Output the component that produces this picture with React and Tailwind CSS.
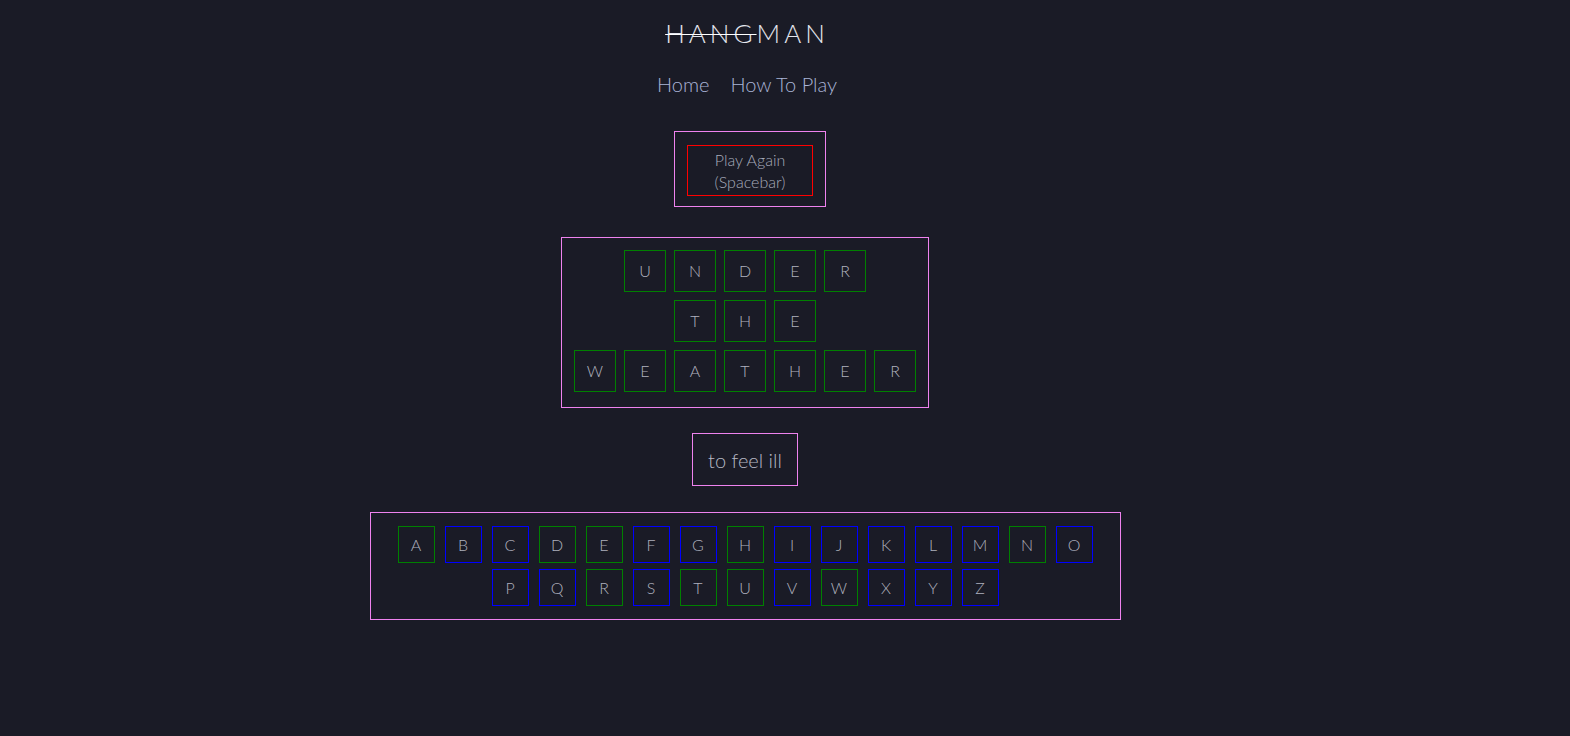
import React from 'react';

const WORDS = ['UNDER', 'THE', 'WEATHER'];

const ROW_ONE = 'ABCDEFGHIJKLMNO'.split('');
const ROW_TWO = 'PQRSTUVWXYZ'.split('');

// letters that were guessed right get a green border, the rest stay blue
const HITS = ['A', 'D', 'E', 'H', 'N', 'R', 'T', 'U', 'W'];

const Key = ({ letter }) => (
  <div
    className={`w-[37px] h-[37px] flex items-center justify-center border text-[16px] text-[#aeb0bd] ${
      HITS.includes(letter) ? 'border-[#008000]' : 'border-[#0000ff]'
    }`}
  >
    {letter}
  </div>
);

export default function App() {
  return (
    <div
      className="min-h-screen bg-[#1a1b26] flex flex-col items-center pr-[80px] font-light"
      style={{ fontFamily: 'Lato, "Open Sans", sans-serif' }}
    >
      {/* Title */}
      <h1 className="pt-[13px] pl-[4px] text-[26px] leading-[40px] tracking-[4px] text-[#e4e6ee] font-light">
        <span className="line-through decoration-white decoration-1">HANG</span>
        <span>MAN</span>
      </h1>

      {/* Nav */}
      <nav className="mt-[17px] ml-[4px] flex gap-[21px] text-[20px] leading-[28px] text-[#a9b4d6]">
        <a href="#">Home</a>
        <a href="#">How To Play</a>
      </nav>

      {/* Play again */}
      <div className="mt-[33px] ml-[10px] border border-[violet] pt-[13px] pb-[10px] px-[12px]">
        <button className="w-[126px] h-[51px] border border-[#ff0000] text-[16px] leading-[22px] text-[#a7abbb] flex flex-col items-center justify-center">
          <span>Play Again</span>
          <span>(Spacebar)</span>
        </button>
      </div>

      {/* Word */}
      <div className="mt-[30px] w-[368px] border border-[violet] pt-[12px] pb-[15px] px-[12px] flex flex-col gap-[8px]">
        {WORDS.map((word, i) => (
          <div key={i} className="flex justify-center gap-[8px]">
            {word.split('').map((ch, j) => (
              <div
                key={j}
                className="w-[42px] h-[42px] border border-[#008000] flex items-center justify-center text-[16px] text-[#b0b2bf]"
              >
                {ch}
              </div>
            ))}
          </div>
        ))}
      </div>

      {/* Hint */}
      <div className="mt-[25px] h-[53px] px-[15px] border border-[violet] flex items-center text-[20px] text-[#b6b8c4]">
        to feel ill
      </div>

      {/* Keyboard */}
      <div className="mt-[26px] w-[751px] border border-[violet] py-[13px] flex flex-col items-center gap-[6px]">
        <div className="flex gap-[10px]">
          {ROW_ONE.map((l) => (
            <Key key={l} letter={l} />
          ))}
        </div>
        <div className="flex gap-[10px]">
          {ROW_TWO.map((l) => (
            <Key key={l} letter={l} />
          ))}
        </div>
      </div>
    </div>
  );
}
